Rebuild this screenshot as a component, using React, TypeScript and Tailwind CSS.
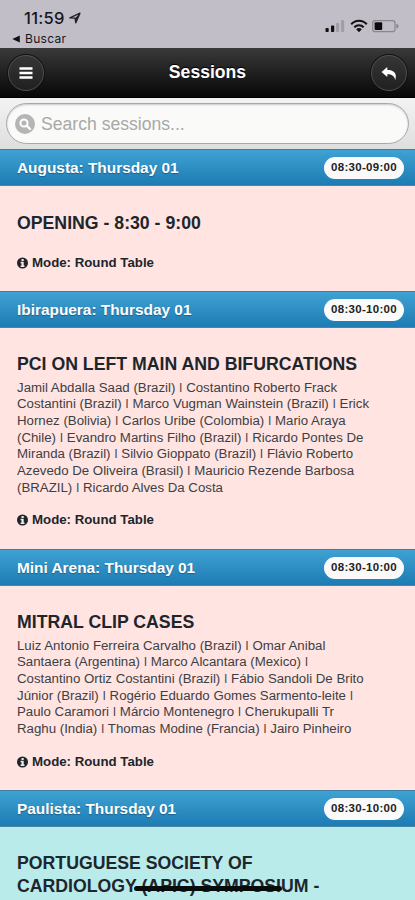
import React from "react";

type Session = {
  room: string;
  time: string;
  title: string[];
  speakers: string[];
  mode?: boolean;
  body: string;
  modeGap: string;
};

const sessions: Session[] = [
  {
    room: "Augusta: Thursday 01",
    time: "08:30-09:00",
    title: ["OPENING - 8:30 - 9:00"],
    speakers: [],
    mode: true,
    body: "h-[105px] bg-[#ffe4e1] pt-[26px]",
    modeGap: "mt-[20px]",
  },
  {
    room: "Ibirapuera: Thursday 01",
    time: "08:30-10:00",
    title: ["PCI ON LEFT MAIN AND BIFURCATIONS"],
    speakers: [
      "Jamil Abdalla Saad (Brazil) | Costantino Roberto Frack",
      "Costantini (Brazil) | Marco Vugman Wainstein (Brazil) | Erick",
      "Hornez (Bolivia) | Carlos Uribe (Colombia) | Mario Araya",
      "(Chile) | Evandro Martins Filho (Brazil) | Ricardo Pontes De",
      "Miranda (Brazil) | Silvio Gioppato (Brazil) | Flávio Roberto",
      "Azevedo De Oliveira (Brasil) | Mauricio Rezende Barbosa",
      "(BRAZIL) | Ricardo Alves Da Costa",
    ],
    mode: true,
    body: "h-[221px] bg-[#ffe4e1] pt-[25px]",
    modeGap: "mt-[16px]",
  },
  {
    room: "Mini Arena: Thursday 01",
    time: "08:30-10:00",
    title: ["MITRAL CLIP CASES"],
    speakers: [
      "Luiz Antonio Ferreira Carvalho (Brazil) | Omar Anibal",
      "Santaera (Argentina) | Marco Alcantara (Mexico) |",
      "Costantino Ortiz Costantini (Brazil) | Fábio Sandoli De Brito",
      "Júnior (Brazil) | Rogério Eduardo Gomes Sarmento-leite |",
      "Paulo Caramori | Márcio Montenegro | Cherukupalli Tr",
      "Raghu (India) | Thomas Modine (Francia) | Jairo Pinheiro",
    ],
    mode: true,
    body: "h-[204px] bg-[#ffe4e1] pt-[25px]",
    modeGap: "mt-[16px]",
  },
  {
    room: "Paulista: Thursday 01",
    time: "08:30-10:00",
    title: ["PORTUGUESE SOCIETY OF", "CARDIOLOGY (APIC) SYMPOSIUM -"],
    speakers: [],
    body: "h-[73px] bg-[#b8ebea] pt-[25px]",
    modeGap: "",
  },
];

function StatusBar() {
  return (
    <div className="flex h-[48px] shrink-0 justify-between bg-[#c1bec7] text-[#17171b]">
      <div className="pl-[12px] pt-[9px]">
        <div className="flex h-[18px] items-center gap-[4px] pl-[12px]">
          <span className="text-[16.5px] font-medium leading-[18px] tracking-[0.3px] font-['Inter','Liberation_Sans',sans-serif]">11:59</span>
          <svg width="12" height="12" viewBox="0 0 12 12" className="-mt-px">
            <path d="M0.8 5.8 11 1.2 6.8 10.8 6 6.2Z" fill="none" stroke="#222226" strokeWidth="1.3" strokeLinejoin="round" />
            <path d="M6 6.2 11 1.2 6.8 10.8Z" fill="#222226" />
          </svg>
        </div>
        <div className="mt-[5px] flex h-[14px] items-center gap-[5px]">
          <svg width="8" height="8" viewBox="0 0 8 8">
            <path d="M0.3 4 7.8 0.5V7.5Z" fill="#111" />
          </svg>
          <span className="text-[12px] leading-[14px] tracking-[0.3px] font-['Inter','Liberation_Sans',sans-serif]">Buscar</span>
        </div>
      </div>
      <svg width="90" height="48" viewBox="0 0 90 48">
        <rect x="0.5" y="28" width="3.2" height="4" rx="0.8" fill="#111" />
        <rect x="6" y="25.5" width="3.2" height="6.5" rx="0.8" fill="#111" />
        <rect x="11" y="23" width="3.2" height="9" rx="0.8" fill="#a09ea6" />
        <rect x="16" y="20" width="3.2" height="12" rx="0.8" fill="#a09ea6" />
        <g fill="none" stroke="#111" strokeWidth="2">
          <path d="M26.2 24.3C30.5 19.6 37.5 19.6 41.8 24.3" />
          <path d="M29.3 27.3C32 24.5 36 24.5 38.7 27.3" />
        </g>
        <path d="M31.2 29.2C32.8 27.7 35.2 27.7 36.8 29.2L34 32.3Z" fill="#111" />
        <rect x="47.7" y="20.7" width="22.3" height="11" rx="2.5" fill="none" stroke="#88868e" strokeWidth="1.2" />
        <rect x="49.6" y="22.3" width="7.6" height="7.8" rx="1" fill="#0c0c0e" />
        <path d="M71.3 23.8C74.3 24.5 74.3 27.8 71.3 28.6Z" fill="#88868e" />
      </svg>
    </div>
  );
}

function NavBar() {
  const button =
    "flex size-[36px] items-center justify-center rounded-full border border-[#505050] bg-linear-to-b from-[#363636] to-[#202020] shadow-[0_0_0_1px_#101010]";
  return (
    <header className="flex h-[50px] shrink-0 items-center justify-between border-b border-black bg-linear-to-b from-[#3a3a3a] via-[#202020] to-[#080808] pl-[8px] pr-[8px]">
      <button className={button}>
        <svg width="14" height="12" viewBox="0 0 14 12">
          <path d="M0.5 1.5H13.5M0.5 6H13.5M0.5 10.5H13.5" stroke="#fff" strokeWidth="2.3" />
        </svg>
      </button>
      <h1 className="text-[17.6px] font-bold text-white [text-shadow:0_-1px_1px_#000]">Sessions</h1>
      <button className={button}>
        <svg width="18" height="16" viewBox="0 0 18 16" className="mt-[2px]">
          <path d="M1.5 6 7.3 1V4C13 4 17.6 6.5 15.2 14.2 14.6 10 12 8.3 7.3 8.3V11Z" fill="#fff" />
        </svg>
      </button>
    </header>
  );
}

function SearchBar() {
  return (
    <div className="flex h-[51px] shrink-0 items-start bg-linear-to-b from-[#f3f3f3] to-[#dedede] px-[6px] pt-[5px]">
      <div className="flex h-[41px] w-full items-center gap-[6px] rounded-full border border-[#a8a8a8] bg-[#fafaf9] pl-[8px] shadow-[inset_0_1px_2px_rgba(0,0,0,0.2)]">
        <svg width="20" height="20" viewBox="0 0 20 20">
          <circle cx="10" cy="10" r="10" fill="#b5b5b5" />
          <circle cx="9" cy="9" r="3.6" fill="none" stroke="#fff" strokeWidth="2" />
          <path d="M11.7 11.7 15 15" stroke="#fff" strokeWidth="2.4" strokeLinecap="round" />
        </svg>
        <span className="text-[17.6px] leading-[22px] text-[#a8a8a8]">Search sessions...</span>
      </div>
    </div>
  );
}

function InfoIcon() {
  return (
    <svg width="11" height="12" viewBox="0 0 11 12">
      <circle cx="5.5" cy="6" r="5.5" fill="#1c262c" />
      <path d="M4.5 1.9H6.7V3.9H4.5ZM3.6 4.7H6.7V8.4H7.5V9.9H3.6V8.4H4.5V6.2H3.6Z" fill="#ffe4e1" />
    </svg>
  );
}

function SpeakerLine({ line }: { line: string }) {
  return (
    <p className="whitespace-nowrap">
      {line.split("|").map((part, i) => (
        <React.Fragment key={i}>
          {i > 0 && <span className="inline-block origin-center -translate-y-px scale-y-75">|</span>}
          {part}
        </React.Fragment>
      ))}
    </p>
  );
}

function SessionBlock({ s }: { s: Session }) {
  return (
    <section className="shrink-0">
      <div className="flex h-[37px] items-center justify-between border-y border-t-[#3f7fa5] border-b-[#4b86a8] bg-linear-to-b from-[#3fa2d3] to-[#1c7cb3] pl-[17px] pr-[11px]">
        <h2 className="whitespace-nowrap pt-px text-[15.4px] font-bold leading-[20px] text-white [text-shadow:0_1px_1px_#1d5f88]">{s.room}</h2>
        <span className="flex h-[22px] w-[80px] items-center justify-center rounded-full bg-[#fafafa] pt-px text-[11.5px] font-bold tracking-[0.3px] text-[#222]">{s.time}</span>
      </div>
      <div className={`${s.body} overflow-hidden pl-[17px] text-[#1c262c]`}>
        {s.title.map((t) => (
          <h3 key={t} className="whitespace-nowrap text-[17.7px] font-bold leading-[22.5px]">{t}</h3>
        ))}
        {s.speakers.length > 0 && (
          <div className="mt-[4px] text-[13.26px] leading-[16.7px] text-[#3c4043]">
            {s.speakers.map((l) => (
              <SpeakerLine key={l} line={l} />
            ))}
          </div>
        )}
        {s.mode && (
          <div className={`${s.modeGap} flex h-[16px] items-center gap-[4px] text-[13.25px] font-bold`}>
            <InfoIcon />
            <span className="whitespace-nowrap">Mode: Round Table</span>
          </div>
        )}
      </div>
    </section>
  );
}

export default function App() {
  return (
    <div className="relative flex h-[900px] w-[415px] flex-col overflow-hidden bg-white font-['Liberation_Sans',Arial,sans-serif]">
      <StatusBar />
      <NavBar />
      <SearchBar />
      {sessions.map((s) => (
        <SessionBlock key={s.room} s={s} />
      ))}
      <div className="absolute bottom-[9px] left-[134px] h-[5px] w-[148px] rounded-full bg-[#080c0c]" />
    </div>
  );
}
